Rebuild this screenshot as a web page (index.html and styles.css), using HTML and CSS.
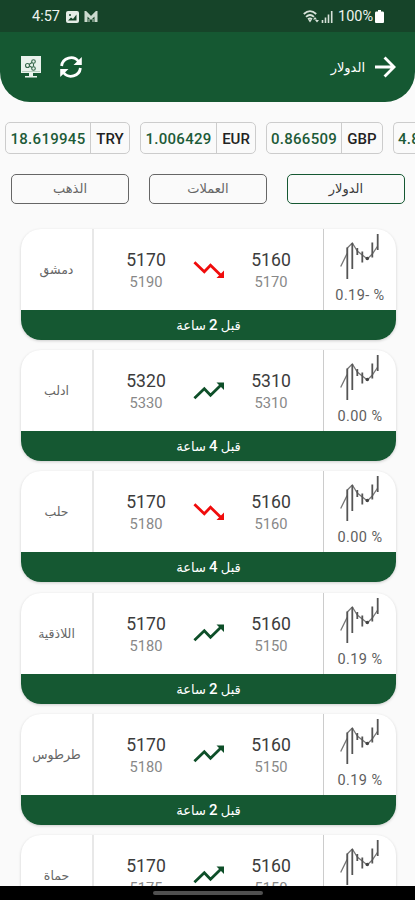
FILE: index.html
```
<!DOCTYPE html>
<html lang="ar">
<head>
  <meta charset="UTF-8" />
  <meta name="viewport" content="width=device-width, initial-scale=1" />
  <title>الدولار</title>
  <link rel="stylesheet" href="styles.css">
</head>
<body>

  <svg class="sprite" aria-hidden="true">
    <symbol id="chart" viewBox="0 0 42 48">
      <path d="M1.7 33.5 8.3 20 V15 L13.3 10 18.3 18 23.3 22 28.3 26 33.3 21 38.7 13" fill="none" stroke="#777" stroke-width="1.3"/>
      <path d="M8.3 14.5V46M13.3 10V36M18.3 15V22M23.3 18.5V29.5M33.3 9.5V24.5M38.7 1V17" stroke="#555" stroke-width="1.8"/>
      <circle cx="28.3" cy="25.5" r="1.8" fill="#444"/>
    </symbol>
    <symbol id="up" viewBox="0 0 32 20">
      <path d="M1.4 17.2 11.3 7.8 17.5 14.2 27.5 4.5" fill="none" stroke="currentColor" stroke-width="2.8"/>
      <path d="M23.5 1.5H31V9Z" fill="currentColor"/>
    </symbol>
    <symbol id="down" viewBox="0 0 32 20">
      <path d="M1.4 2.3 11.3 11.7 17.5 5.3 27.5 15" fill="none" stroke="currentColor" stroke-width="2.8"/>
      <path d="M23.5 18H31V10.5Z" fill="currentColor"/>
    </symbol>
  </svg>

  <div class="status">
    <span class="clock">4:57</span>
    <svg class="picture" viewBox="0 0 13 12"><rect width="13" height="12" rx="2" fill="#e4ece6"/><path d="M2 9.5 5 6.5 7 8 10.5 3.5V9.5Z" fill="#164429"/><circle cx="4" cy="4" r="1" fill="#164429"/></svg>
    <svg class="mail" viewBox="0 0 14 12"><path d="M2 11V2L7 7 12 2V11" fill="none" stroke="#cbdace" stroke-width="3"/><path d="M5 11V8M9 11V8" stroke="#cbdace"/></svg>
    <span class="space"></span>
    <svg class="wifi" viewBox="0 0 17 13"><g fill="none" stroke="#d7e2d9" stroke-width="1.8"><path d="M.8 4Q7 -1.8 13.2 4M3 6.8Q7 3.2 11 6.8M5 9.2Q7 7.5 9 9.2"/></g><path d="M7 12.5 5 9.5H9ZM10 9.5l2-2.5 2 2.5ZM12 10h4l-2 2.5Z" fill="#d7e2d9"/></svg>
    <svg class="signal" viewBox="0 0 12 12"><path d="M1.5 12V9M4.5 12V6.5M7.5 12V3.5M10.7 12V0" stroke="#d7e2d9" stroke-width="1.6"/></svg>
    <span class="percent">100%</span>
    <svg class="battery" viewBox="0 0 9 13"><path d="M3 0H6V1.5H8Q9 1.5 9 3V12Q9 13 8 13H1Q0 13 0 12V3Q0 1.5 1 1.5H3Z" fill="#fff"/></svg>
  </div>

  <header class="header">
    <svg class="monitor" viewBox="0 0 22 22"><path d="M1 0H21V17H13V20H17V21.5H5V20H9V17H1Z" fill="#e9f2ec"/><path d="M2 15.5H20" stroke="#9fbda9" stroke-width=".7"/><g fill="none" stroke="#35674a" stroke-width="1.1"><circle cx="7.5" cy="9.5" r="2"/><circle cx="13.5" cy="5.5" r="1.8"/><circle cx="13.5" cy="12.5" r="1.8"/><path d="M9 8.5 12 6.5M9.5 10 12 11.5M13.5 7.5V10.5"/></g></svg>
    <svg class="refresh" viewBox="0 0 22 22"><g fill="none" stroke="#fff" stroke-width="2.8"><path d="M1.6 10A9.4 9.2 0 0 1 18.5 5.5"/><path d="M20.4 12A9.4 9.2 0 0 1 3.5 16.5"/></g><path d="M21.8 1V9H13.5ZM.2 21V13H8.5Z" fill="#fff"/></svg>
    <span class="space"></span>
    <h1 dir="rtl">الدولار</h1>
    <svg class="arrow" viewBox="0 0 22 22"><path d="M0 11H19M10 1 20 11 10 21" fill="none" stroke="#fff" stroke-width="3"/></svg>
  </header>

  <div class="rates">
    <div class="rate try"><b>18.619945</b><span>TRY</span></div>
    <div class="rate eur"><b>1.006429</b><span>EUR</span></div>
    <div class="rate gbp"><b>0.866509</b><span>GBP</span></div>
    <div class="rate next"><b>4.8</b></div>
  </div>

  <nav class="tabs" dir="rtl">
    <button class="tab active">الدولار</button>
    <button class="tab">العملات</button>
    <button class="tab">الذهب</button>
  </nav>

  <main class="list">
    <div class="card">
      <div class="row">
        <div class="city" dir="rtl">دمشق</div>
        <div class="prices">
          <div class="price">5170<small>5190</small></div>
          <svg class="trend red"><use href="#down"/></svg>
          <div class="price">5160<small>5170</small></div>
        </div>
        <div class="change"><svg><use href="#chart"/></svg>0.19- %</div>
      </div>
      <div class="time" dir="rtl">قبل <b>2</b> ساعة</div>
    </div>
    <div class="card">
      <div class="row">
        <div class="city" dir="rtl">ادلب</div>
        <div class="prices">
          <div class="price">5320<small>5330</small></div>
          <svg class="trend"><use href="#up"/></svg>
          <div class="price">5310<small>5310</small></div>
        </div>
        <div class="change"><svg><use href="#chart"/></svg>0.00 %</div>
      </div>
      <div class="time" dir="rtl">قبل <b>4</b> ساعة</div>
    </div>
    <div class="card">
      <div class="row">
        <div class="city" dir="rtl">حلب</div>
        <div class="prices">
          <div class="price">5170<small>5180</small></div>
          <svg class="trend red"><use href="#down"/></svg>
          <div class="price">5160<small>5160</small></div>
        </div>
        <div class="change"><svg><use href="#chart"/></svg>0.00 %</div>
      </div>
      <div class="time" dir="rtl">قبل <b>4</b> ساعة</div>
    </div>
    <div class="card">
      <div class="row">
        <div class="city" dir="rtl">اللاذقية</div>
        <div class="prices">
          <div class="price">5170<small>5180</small></div>
          <svg class="trend"><use href="#up"/></svg>
          <div class="price">5160<small>5150</small></div>
        </div>
        <div class="change"><svg><use href="#chart"/></svg>0.19 %</div>
      </div>
      <div class="time" dir="rtl">قبل <b>2</b> ساعة</div>
    </div>
    <div class="card">
      <div class="row">
        <div class="city" dir="rtl">طرطوس</div>
        <div class="prices">
          <div class="price">5170<small>5180</small></div>
          <svg class="trend"><use href="#up"/></svg>
          <div class="price">5160<small>5150</small></div>
        </div>
        <div class="change"><svg><use href="#chart"/></svg>0.19 %</div>
      </div>
      <div class="time" dir="rtl">قبل <b>2</b> ساعة</div>
    </div>
    <div class="card">
      <div class="row">
        <div class="city" dir="rtl">حماة</div>
        <div class="prices">
          <div class="price">5170<small>5175</small></div>
          <svg class="trend"><use href="#up"/></svg>
          <div class="price">5160<small>5150</small></div>
        </div>
        <div class="change"><svg><use href="#chart"/></svg></div>
      </div>
    </div>
  </main>

  <div class="navbar"><span></span></div>

</body>
</html>
```
FILE: styles.css
```
* {
  margin: 0;
  padding: 0;
  box-sizing: border-box;
}

body {
  width: 415px;
  height: 900px;
  display: flex;
  flex-direction: column;
  overflow: hidden;
  background: #fafafa;
  font-family: Roboto, "DejaVu Sans", sans-serif;
  color: #3c3c3c;
}

svg {
  display: block;
  flex: none;
}

.sprite {
  position: absolute;
  width: 0;
  height: 0;
}

.space {
  flex: 1;
}

.status {
  flex: none;
  height: 32px;
  padding: 1px 31px 0 32px;
  display: flex;
  align-items: center;
  background: #164429;
  color: #eef3ef;
  font-size: 14.5px;
}

.clock {
  width: 34px;
}

.picture {
  width: 13px;
  height: 12px;
  margin-right: 5px;
}

.mail {
  width: 14px;
  height: 12px;
}

.wifi {
  width: 17px;
  height: 13px;
  margin-right: 1px;
}

.signal {
  width: 12px;
  height: 12px;
  margin-right: 5px;
}

.percent {
  width: 37px;
}

.battery {
  width: 9px;
  height: 13px;
}

.header {
  flex: none;
  height: 70px;
  padding: 0 19px 0 20px;
  display: flex;
  align-items: center;
  background: #155832;
  border-radius: 0 0 30px 30px;
}

.monitor {
  width: 22px;
  height: 22px;
  margin-right: 18px;
}

.refresh {
  width: 22px;
  height: 22px;
}

.header h1 {
  font-size: 13px;
  font-weight: normal;
  color: #fff;
  margin-right: 10px;
}

.arrow {
  width: 21px;
  height: 22px;
}

.rates {
  flex: none;
  display: flex;
  gap: 10px;
  margin: 20px 0 0 5px;
  overflow: hidden;
}

.rate {
  flex: none;
  display: flex;
  height: 32px;
  border: 1px solid #ccc;
  border-radius: 5px;
  font-size: 15px;
  line-height: 32px;
  font-weight: 500;
  color: #222;
  text-align: center;
}

.rate b {
  flex: 1;
  color: #1d5b38;
  font-weight: 500;
  letter-spacing: .3px;
}

.rate span {
  width: 39px;
  border-left: 1px solid #ccc;
}

.try {
  width: 125px;
}

.eur {
  width: 116px;
}

.gbp {
  width: 117px;
}

.gbp span {
  width: 41px;
}

/* scrolled off the right side */
.next {
  flex: 1;
  padding-left: 4px;
  border-right: 0;
  border-radius: 5px 0 0 5px;
  text-align: left;
  overflow: hidden;
}

.tabs {
  flex: none;
  display: flex;
  justify-content: space-between;
  padding: 0 10px 0 11px;
  margin-top: 20px;
}

.tab {
  width: 118px;
  height: 30px;
  padding-bottom: 1px;
  background: #fafafa;
  border: 1.5px solid #666;
  border-radius: 5px;
  color: #666;
  font-family: "DejaVu Sans", sans-serif;
  font-size: 13px;
}

.tab.active {
  border-color: #155832;
  color: #3c3c3c;
}

.list {
  flex: 1;
  min-height: 0;
  overflow: hidden;
  padding: 25px 19px 0 21px;
}

.card {
  height: 111px;
  margin-bottom: 10.2px;
  background: #fff;
  border-radius: 20px;
  overflow: hidden;
  box-shadow: 0 1px 3px rgba(0, 0, 0, .18);
}

.row {
  display: flex;
  height: 81px;
}

.city {
  width: 73px;
  display: flex;
  align-items: center;
  justify-content: center;
  border-right: 2px solid #e8e8e8;
  font-size: 12.5px;
  color: #666;
}

.prices {
  flex: 1;
  display: flex;
  align-items: center;
  justify-content: center;
  gap: 26px;
}

.price {
  width: 41px;
  text-align: center;
  font-size: 17.6px;
  line-height: 23px;
  padding-top: 3px;
}

.price small {
  display: block;
  font-size: 14.7px;
  line-height: 21px;
  color: #888;
}

.trend {
  width: 32px;
  height: 20px;
  color: #0e4f29;
}

.trend.red {
  color: #f00c0c;
}

.change {
  width: 73px;
  padding-top: 4px;
  border-left: 1px solid #ccc;
  text-align: center;
  font-size: 14.5px;
  line-height: 17px;
  letter-spacing: .4px;
  color: #606060;
}

.change svg {
  width: 42px;
  height: 48px;
  margin: 0 auto 6px 15px;
}

.time {
  height: 30px;
  background: #155832;
  color: #fff;
  text-align: center;
  font-size: 13px;
  line-height: 30px;
}

.time b {
  font-size: 15px;
  font-weight: 500;
}

.navbar {
  flex: none;
  height: 14px;
  background: #000;
  display: flex;
  justify-content: center;
  padding-top: 5px;
}

.navbar span {
  width: 110px;
  height: 4px;
  border-radius: 2px;
  background: #505050;
}
```
